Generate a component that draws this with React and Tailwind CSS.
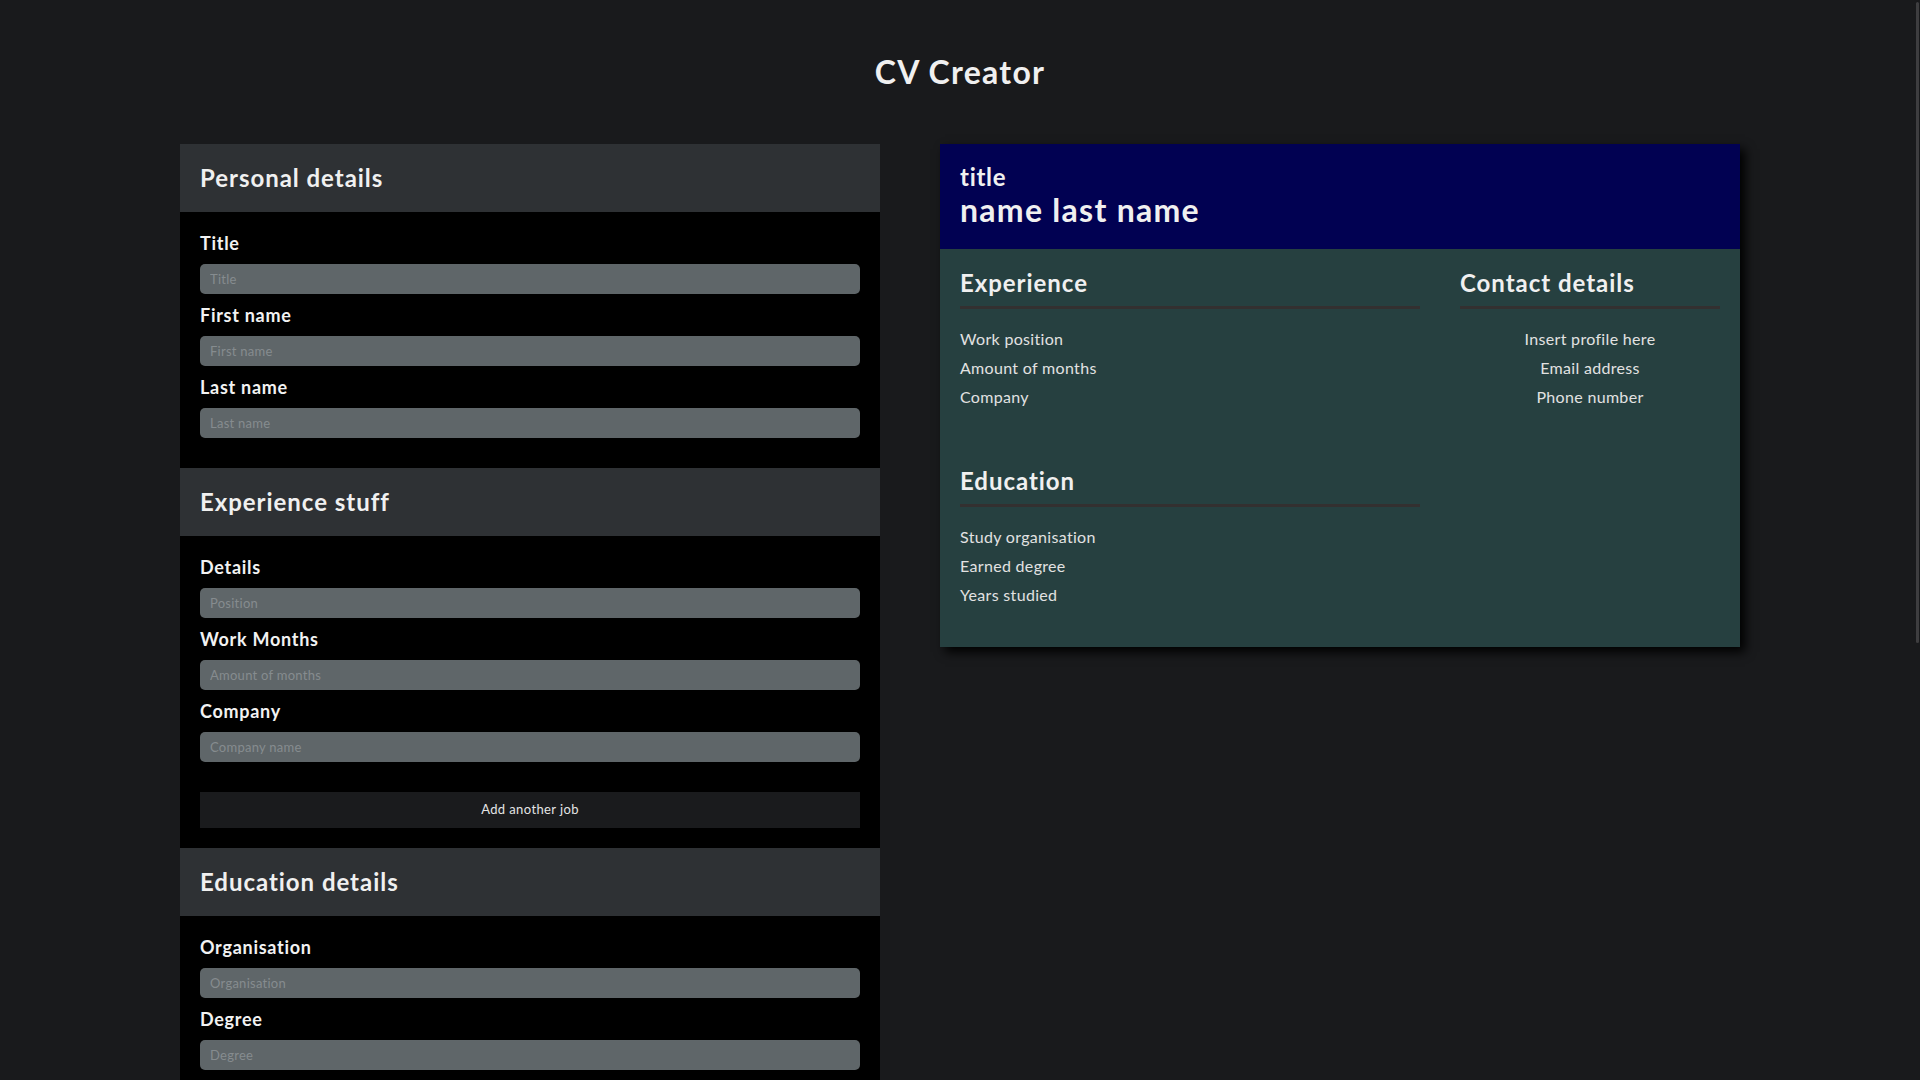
import { useState } from 'react';

const FONT = "font-['Lato','Noto_Sans',sans-serif]";

function Field({ label, placeholder }) {
  const [value, setValue] = useState('');
  return (
    <div>
      <label className="block text-[18px] font-bold leading-[22px] tracking-[0.04em] text-[#f2f2f2]">
        {label}
      </label>
      <input
        value={value}
        onChange={(e) => setValue(e.target.value)}
        placeholder={placeholder}
        className="mt-[10px] block h-[30px] w-full rounded-[5px] bg-[#5f6669] px-[10px] text-[13px] tracking-[0.02em] text-white outline-none placeholder:text-[#868c8f]"
      />
    </div>
  );
}

function FormSection({ title, fields, button }) {
  return (
    <section>
      <div className="flex h-[68px] items-center bg-[#2e3134] px-5">
        <h2 className="text-[24px] font-bold leading-[28px] tracking-[0.04em] text-[#f0f0f0]">{title}</h2>
      </div>
      <div className={`bg-black px-5 pt-5 ${button ? 'pb-5' : 'pb-[30px]'}`}>
        <div className="flex flex-col gap-[10px]">
          {fields.map((f) => (
            <Field key={f.label} label={f.label} placeholder={f.placeholder} />
          ))}
        </div>
        {button && (
          <button className="mt-[30px] block h-[36px] w-full bg-[#1a1b1d] text-[13px] tracking-[0.03em] text-[#e4e4e4]">
            {button}
          </button>
        )}
      </div>
    </section>
  );
}

function CvBlock({ title, items, center }) {
  return (
    <div className="pb-[15px]">
      <h3 className="border-b-[3px] border-[#333030] pb-[9px] text-[24px] font-bold leading-[28px] tracking-[0.04em] text-[#f0f0f0]">
        {title}
      </h3>
      <ul className={`mt-[15px] ${center ? 'text-center' : ''}`}>
        {items.map((it) => (
          <li key={it} className="text-[16px] leading-[29px] tracking-[0.02em] text-[#e2e2e2]">
            {it}
          </li>
        ))}
      </ul>
    </div>
  );
}

export default function App() {
  return (
    <div className={`relative h-screen overflow-hidden bg-[#191a1c] ${FONT}`}>
      <div className="h-[144px] pt-[52px] text-center">
        <h1 className="text-[32px] font-bold leading-[40px] tracking-[0.04em] text-[#f0f0f0]">CV Creator</h1>
      </div>

      <div className="flex items-start justify-center gap-[60px]">
        {/* Form */}
        <div className="w-[700px]">
          <FormSection
            title="Personal details"
            fields={[
              { label: 'Title', placeholder: 'Title' },
              { label: 'First name', placeholder: 'First name' },
              { label: 'Last name', placeholder: 'Last name' },
            ]}
          />
          <FormSection
            title="Experience stuff"
            fields={[
              { label: 'Details', placeholder: 'Position' },
              { label: 'Work Months', placeholder: 'Amount of months' },
              { label: 'Company', placeholder: 'Company name' },
            ]}
            button="Add another job"
          />
          <FormSection
            title="Education details"
            fields={[
              { label: 'Organisation', placeholder: 'Organisation' },
              { label: 'Degree', placeholder: 'Degree' },
              { label: 'Years', placeholder: 'Years studied' },
            ]}
            button="Add another degree"
          />
        </div>

        {/* Preview */}
        <div className="w-[800px] shadow-[5px_5px_10px_black]">
          <div className="h-[105px] bg-[#010152] px-5 pt-[19px] text-[#f0f0f0]">
            <p className="text-[24px] font-bold leading-[28px] tracking-[0.03em]">title</p>
            <p className="text-[32px] font-bold leading-[38px] tracking-[0.04em]">name last name</p>
          </div>
          <div className="flex gap-10 bg-[#264040] px-5 pb-[23px] pt-5">
            <div className="flex w-[460px] flex-col gap-[41px]">
              <CvBlock title="Experience" items={['Work position', 'Amount of months', 'Company']} />
              <CvBlock title="Education" items={['Study organisation', 'Earned degree', 'Years studied']} />
            </div>
            <div className="w-[260px]">
              <CvBlock
                title="Contact details"
                items={['Insert profile here', 'Email address', 'Phone number']}
                center
              />
            </div>
          </div>
        </div>
      </div>

      {/* overlay scrollbar */}
      <div className="absolute right-[1px] top-[2px] h-[641px] w-[3px] rounded-full bg-[#3e3e40]" />
    </div>
  );
}
